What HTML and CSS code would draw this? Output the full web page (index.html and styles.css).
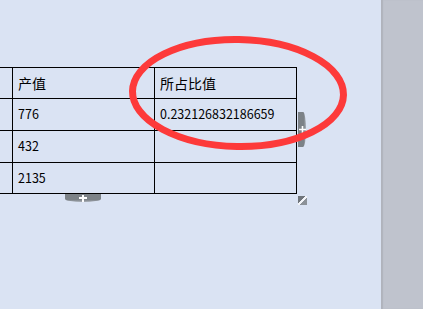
FILE: index.html
```html
<!DOCTYPE html>
<html lang="zh-CN">

<head>
    <meta charset="UTF-8">
    <meta name="viewport" content="width=device-width, initial-scale=1.0">
    <title>产值表</title>
    <link rel="stylesheet" href="styles.css">
</head>

<body>

    <div class="pagina">
        <div class="tabla-wrap">
            <div class="tabla">
                <div class="celda"></div>
                <div class="celda cabecera">产值</div>
                <div class="celda cabecera">所占比值</div>

                <div class="celda"></div>
                <div class="celda">776</div>
                <div class="celda">0.232126832186659</div>

                <div class="celda"></div>
                <div class="celda">432</div>
                <div class="celda"></div>

                <div class="celda"></div>
                <div class="celda">2135</div>
                <div class="celda"></div>
            </div>

            <!-- tiradores de la tabla -->
            <div class="tirador-fila">
                <svg width="8" height="7" viewBox="0 0 8 7"><path d="M0 3h8M4 0v7" stroke="#fff" stroke-width="2"/></svg>
            </div>
            <div class="tirador-col">
                <svg width="7" height="7" viewBox="0 0 7 7"><path d="M0 3.5h7M3.5 0v7" stroke="#fff" stroke-width="1.6"/></svg>
            </div>
            <div class="tirador-esquina"></div>
        </div>

        <!-- marca roja -->
        <svg class="marca" width="240" height="140" viewBox="0 0 240 140">
            <ellipse cx="118" cy="66" rx="105.5" ry="53.5" fill="none" stroke="#fd3a3a" stroke-width="7" transform="rotate(1 118 66)"/>
        </svg>
    </div>

    <div class="lateral"></div>

</body>

</html>
```

FILE: styles.css
```css
body {
    margin: 0;
    height: 309px;
    display: flex;
    background: #dae3f3;
    font-family: "Noto Sans CJK SC", "Noto Sans", sans-serif;
    color: #000;
    overflow: hidden;
}

.pagina {
    position: relative;
    width: 381px;
    padding-top: 67px;
}

.lateral {
    flex: 1;
    background: #bfc3cd;
    box-shadow: inset 2px 0 1px rgba(0, 0, 0, 0.08);
}

.tabla-wrap {
    position: relative;
    margin-left: -67px;
    width: 364px;
}

.tabla {
    display: grid;
    grid-template-columns: 80px 142px 142px;
    grid-template-rows: 31px 32px 32px 31px;
    border-top: 1px solid #000;
}

.celda {
    border-right: 1px solid #000;
    border-bottom: 1px solid #000;
    padding-left: 5px;
    display: flex;
    align-items: center;
    font-size: 12.5px;
    line-height: 1;
}

.cabecera {
    font-size: 14px;
}

.tirador-fila {
    position: absolute;
    left: 132px;
    top: 127px;
    width: 36px;
    height: 8px;
    background: linear-gradient(#7c8287 70%, #a3a9b0);
    border-radius: 0 0 18px 18px / 0 0 3px 3px;
    display: flex;
    justify-content: center;
    align-items: center;
}

.tirador-col {
    position: absolute;
    left: 365px;
    top: 45px;
    width: 8px;
    height: 35px;
    background: linear-gradient(to right, #7c8287 70%, #a3a9b0);
    border-radius: 0 3px 3px 0 / 0 18px 18px 0;
    display: flex;
    justify-content: center;
    align-items: center;
}

.tirador-esquina {
    position: absolute;
    left: 365px;
    top: 129px;
    width: 9px;
    height: 9px;
    background: linear-gradient(to bottom right, #6f757b 44%, #f2f4f8 44%, #f2f4f8 56%, #8c9298 56%);
}

.marca {
    position: absolute;
    left: 120px;
    top: 27px;
}
```
